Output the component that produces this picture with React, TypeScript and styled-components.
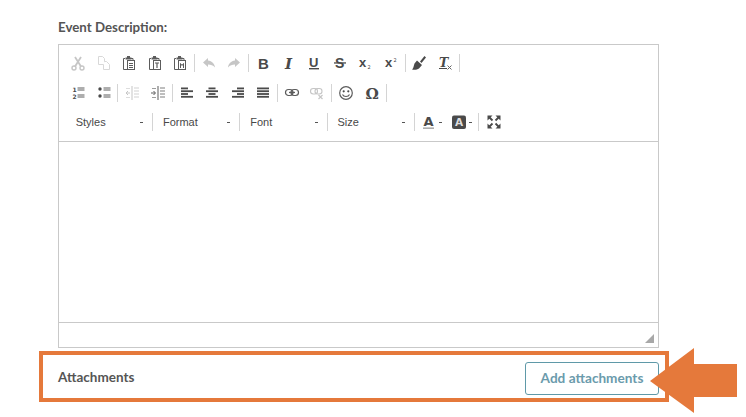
import React from "react";
import styled, { createGlobalStyle } from "styled-components";

const Global = createGlobalStyle`
  html, body { margin: 0; padding: 0; background: #fff; }
  body { width: 746px; height: 417px; overflow: hidden; font-family: "Lato", "Liberation Sans", sans-serif; }
`;

const Page = styled.div`
  position: relative;
  width: 746px;
  height: 417px;
  padding: 20px 0 0 39px;
  box-sizing: border-box;
`;

const Label = styled.div`
  margin-left: 19px;
  height: 24px;
  font: 700 13.3px/15px "Lato", sans-serif;
  color: #555;
`;

const Editor = styled.div`
  margin-left: 19px;
  width: 601px;
  height: 304px;
  box-sizing: border-box;
  border: 1px solid #c9c9c9;
  display: flex;
  flex-direction: column;
`;

const Toolbar = styled.div`
  height: 96px;
  flex: none;
  box-sizing: content-box;
  border-bottom: 1px solid #c9c9c9;
  padding-left: 6.3px;
  display: flex;
  flex-direction: column;
`;

const Row = styled.div<{ $h: number }>`
  height: ${(p) => p.$h}px;
  display: flex;
  align-items: center;
`;

const ComboRow = styled(Row)`
  padding-left: 1.7px;
`;

const Btn = styled.div<{ $w?: number }>`
  width: ${(p) => p.$w ?? 25.5}px;
  height: 24px;
  flex: none;
  display: flex;
  align-items: center;
  justify-content: center;
`;

const Sep = styled.div`
  width: 1px;
  height: 18px;
  margin: 0 1.15px;
  background: #d4d4d4;
  flex: none;
`;

const Combo = styled.div`
  width: 84px;
  flex: none;
  height: 24px;
  padding-left: 8.7px;
  box-sizing: border-box;
  display: flex;
  align-items: center;
  position: relative;
  font: 400 11px/14px "Liberation Sans", Arial, sans-serif;
  color: #484848;
`;

const Caret = styled.span`
  position: absolute;
  right: 8px;
  top: 12px;
  width: 3px;
  height: 1px;
  background: #555;
`;

const SmallCaret = styled.span`
  width: 3px;
  height: 1px;
  background: #555;
  margin-left: 2px;
  flex: none;
`;

const Body = styled.div`
  flex: 1;
`;

const Footer = styled.div`
  height: 25px;
  flex: none;
  box-sizing: border-box;
  border-top: 1px solid #c9c9c9;
  display: flex;
  justify-content: flex-end;
  align-items: flex-end;
  padding: 0 4px 4px 0;
`;

const AttachBox = styled.div`
  margin-top: 3px;
  width: 630px;
  height: 51px;
  box-sizing: border-box;
  border: 4px solid #e5793b;
  padding: 3px 6px 0 15px;
  display: flex;
  align-items: center;
  justify-content: space-between;
`;

const AttachTitle = styled.div`
  font: 700 13.5px/15px "Lato", sans-serif;
  color: #555;
  padding-bottom: 2px;
`;

const AddButton = styled.button`
  width: 134px;
  height: 33px;
  box-sizing: border-box;
  background: #fff;
  border: 1px solid #5f99a8;
  border-radius: 3px;
  font: 700 13.6px/15px "Lato", sans-serif;
  color: #6b9bac;
  padding: 0;
`;

const Arrow = styled.svg`
  position: absolute;
  left: 650px;
  top: 348px;
`;

const D = "#4a4a4a";
const M = "#5c5c5c";
const L = "#c6c6c6";

type P = { children: React.ReactNode };
const I = ({ children }: P) => (
  <svg width="16" height="16" viewBox="0 0 16 16" fill="none">{children}</svg>
);

const Clip = ({ inner }: { inner: React.ReactNode }) => (
  <I>
    <path d="M6 14.500H2.500V3.500H4M10 3.500h2V5" stroke={M} />
    <path d="M4.500 2.500h1.500V1h3v1.500h1.500v2h-6z" fill={M} />
    <rect x="6.500" y="5.500" width="7" height="9" fill="#fff" stroke={M} />
    {inner}
  </I>
);

const G = (t: string, x: number, y: number, size: number, extra: React.SVGProps<SVGTextElement> = {}) => (
  <text x={x} y={y} fontSize={size} fill={D} {...extra}>{t}</text>
);
const SANS = "'DejaVu Sans', sans-serif";
const ARIAL = "'Liberation Sans', sans-serif";
const SERIF = "'DejaVu Serif', serif";

const Bars = ({ rows }: { rows: [number, number, number?][] }) => (
  <I>
    {rows.map(([x, w, h], i) => (
      <rect key={i} x={x} y={2.5 + i * 2.8} width={w} height={h ?? 1.8} fill={D} />
    ))}
  </I>
);

const Indent = ({ c, flip }: { c: string; flip?: boolean }) => (
  <I>
    <rect x="7.500" y="1" width="1" height="14" fill={c} />
    <path d={flip ? "M1 8h4M3.500 6l2 2-2 2" : "M6 8H2M4 6L2 8l2 2"} stroke={c} />
    <path d="M10 3h5M10 6h5M10 9h5M10 12h5" stroke={c} opacity=".8" />
    <path d="M2 3.500h4M2 12.500h4" stroke={c} opacity=".6" />
  </I>
);

export default function App() {
  return (
    <Page>
      <Global />
      <Label>Event Description:</Label>
      <Editor>
        <Toolbar>
          <Row $h={36}>
            <Btn>
              <I>
                <circle cx="4" cy="13" r="2" stroke={L} strokeWidth="1.400" />
                <circle cx="12" cy="13" r="2" stroke={L} strokeWidth="1.400" />
                <path d="M5 11.500L11 2M11 11.500L5 2" stroke={L} strokeWidth="1.800" />
              </I>
            </Btn>
            <Btn>
              <I>
                <path d="M2.500 1.500h4l2 2v6h-6z" stroke="#d8d8d8" />
                <path d="M8.500 6.500h2l3 3v5h-6v-5" fill="#fff" stroke="#d8d8d8" />
              </I>
            </Btn>
            <Btn><Clip inner={<path d="M8 8.500h4M8 10.500h4M8 12.500h4" stroke={M} />} /></Btn>
            <Btn><Clip inner={<path d="M8 8h4M10 8v5" stroke={M} strokeWidth="1.200" />} /></Btn>
            <Btn><Clip inner={<path d="M8.500 13V8.500L10 10.500l1.500-2V13" stroke={M} />} /></Btn>
            <Sep />
            <Btn>
              <I><path d="M7 3L2 7.500 7 12V9.500c3 0 5 .8 7 3-.5-4-3-6.500-7-7z" fill={L} /></I>
            </Btn>
            <Btn>
              <I><path d="M9 3l5 4.500L9 12V9.500c-3 0-5 .8-7 3 .5-4 3-6.500 7-7z" fill={L} /></I>
            </Btn>
            <Sep />
            <Btn><I>{G("B", 3, 13.500, 15, { fontFamily: ARIAL, fontWeight: 700 })}</I></Btn>
            <Btn><I>{G("I", 4, 13.500, 15, { fontFamily: SERIF, fontWeight: 700, fontStyle: "italic" })}</I></Btn>
            <Btn>
              <I>
                {G("U", 3, 11.500, 13, { fontFamily: ARIAL, fontWeight: 700 })}
                <rect x="3" y="13" width="10" height="1.400" fill={D} />
              </I>
            </Btn>
            <Btn>
              <I>
                {G("S", 3, 13, 14, { fontFamily: ARIAL, fontWeight: 700 })}
                <rect x="2" y="7.300" width="12" height="1.300" fill={D} />
              </I>
            </Btn>
            <Btn>
              <I>
                {G("x", 2, 11.500, 13, { fontFamily: ARIAL, fontWeight: 700 })}
                {G("2", 10.500, 13.500, 5, { fontFamily: SANS })}
              </I>
            </Btn>
            <Btn>
              <I>
                {G("x", 2, 11.500, 13, { fontFamily: ARIAL, fontWeight: 700 })}
                {G("2", 10.500, 6.500, 5, { fontFamily: SANS })}
              </I>
            </Btn>
            <Sep />
            <Btn>
              <I>
                <path d="M9 6.500L13.500 1 15 2.500 10.500 8z" fill={D} />
                <path d="M6 5.500L11 10 8 13.500c-2 1.500-5 1.500-7 1 1.500-1 1.500-3 2.500-6z" fill={D} />
              </I>
            </Btn>
            <Btn>
              <I>
                {G("T", 2, 11.500, 12.500, { fontFamily: SERIF, fontWeight: 700, fontStyle: "italic" })}
                <rect x="2" y="13" width="8" height="1" fill={D} />
                <path d="M10.500 10.500l4 4M14.500 10.500l-4 4" stroke="#666" />
              </I>
            </Btn>
            <Sep />
          </Row>
          <Row $h={24}>
            <Btn>
              <I>
                {G("1", 2.500, 7, 6, { fontFamily: SANS, fontWeight: 700 })}
                {G("2", 2.500, 14, 6, { fontFamily: SANS, fontWeight: 700 })}
                <path d="M7.500 3h7M7.500 5h7M7.500 10h7M7.500 12h7" stroke={M} />
              </I>
            </Btn>
            <Btn>
              <I>
                <circle cx="4" cy="4" r="1.700" fill={D} />
                <circle cx="4" cy="11" r="1.700" fill={D} />
                <path d="M7.500 3h7M7.500 5h7M7.500 10h7M7.500 12h7" stroke={M} />
              </I>
            </Btn>
            <Sep />
            <Btn><Indent c={L} /></Btn>
            <Btn><Indent c={M} flip /></Btn>
            <Sep />
            <Btn><Bars rows={[[2, 7], [2, 12], [2, 7], [2, 12]]} /></Btn>
            <Btn><Bars rows={[[4.500, 7], [2, 12], [4.500, 7], [2, 12]]} /></Btn>
            <Btn><Bars rows={[[7, 7], [2, 12], [7, 7], [2, 12]]} /></Btn>
            <Btn><Bars rows={[[2, 12], [2, 12], [2, 12], [2, 12]]} /></Btn>
            <Sep />
            <Btn>
              <I>
                <rect x="1.500" y="4.500" width="7.500" height="6" rx="3" stroke={M} strokeWidth="1.200" />
                <rect x="7" y="4.500" width="7.500" height="6" rx="3" stroke={M} strokeWidth="1.200" />
                <rect x="5" y="6.800" width="6" height="1.300" fill={M} />
              </I>
            </Btn>
            <Btn>
              <I>
                <rect x="1.500" y="3.500" width="7" height="5.500" rx="2.700" stroke={L} strokeWidth="1.100" />
                <rect x="6" y="3.500" width="7" height="5.500" rx="2.700" stroke={L} strokeWidth="1.100" />
                <path d="M9.500 10l4 4M13.500 10l-4 4" stroke={L} strokeWidth="1.200" />
              </I>
            </Btn>
            <Sep />
            <Btn>
              <I>
                <circle cx="8" cy="8" r="6.300" stroke={M} strokeWidth="1.200" />
                <circle cx="5.700" cy="6.300" r="1.100" fill={D} />
                <circle cx="10.300" cy="6.300" r="1.100" fill={D} />
                <path d="M4.500 9.500c1 2.600 6 2.600 7 0" stroke={M} strokeWidth="1.100" />
              </I>
            </Btn>
            <Btn>
              <I>{G("Ω", 1.500, 13.500, 15, { fontFamily: SERIF, fontWeight: 700 })}</I>
            </Btn>
            <Sep />
          </Row>
          <ComboRow $h={34}>
            <Combo>Styles<Caret /></Combo>
            <Sep />
            <Combo>Format<Caret /></Combo>
            <Sep />
            <Combo>Font<Caret /></Combo>
            <Sep />
            <Combo>Size<Caret /></Combo>
            <Sep />
            <Btn $w={30}>
              <I>
                {G("A", 2.500, 12, 13, { fontFamily: SANS, fontWeight: 700 })}
                <rect x="2" y="13.500" width="11" height="1.300" fill="#999" />
              </I>
              <SmallCaret />
            </Btn>
            <Btn $w={31}>
              <I>
                <rect x="1" y="1.500" width="14" height="13.500" rx="2" fill={D} />
                <text x="4" y="12" fontSize="10.500" fontWeight="700" fontFamily={SANS} fill="#ddd">A</text>
              </I>
              <SmallCaret />
            </Btn>
            <Sep />
            <Btn $w={27}>
              <I>
                <path d="M1.500 1.500h5L1.500 6.500zM14.500 1.500v5l-5-5zM1.500 14.500v-5l5 5zM14.500 14.500h-5l5-5z" fill={D} />
                <path d="M3 3l3.500 3.500M13 3L9.500 6.500M3 13l3.500-3.500M13 13L9.500 9.500" stroke={D} strokeWidth="1.800" />
              </I>
            </Btn>
          </ComboRow>
        </Toolbar>
        <Body />
        <Footer>
          <svg width="9" height="9" viewBox="0 0 9 9"><path d="M9 0v9H0z" fill="#a8a8a8" /></svg>
        </Footer>
      </Editor>
      <AttachBox>
        <AttachTitle>Attachments</AttachTitle>
        <AddButton>Add attachments</AddButton>
      </AttachBox>
      <Arrow width="87" height="65" viewBox="0 0 87 65">
        <path d="M0 33L44 0V16H87V49H44V65z" fill="#e5793b" />
      </Arrow>
    </Page>
  );
}
